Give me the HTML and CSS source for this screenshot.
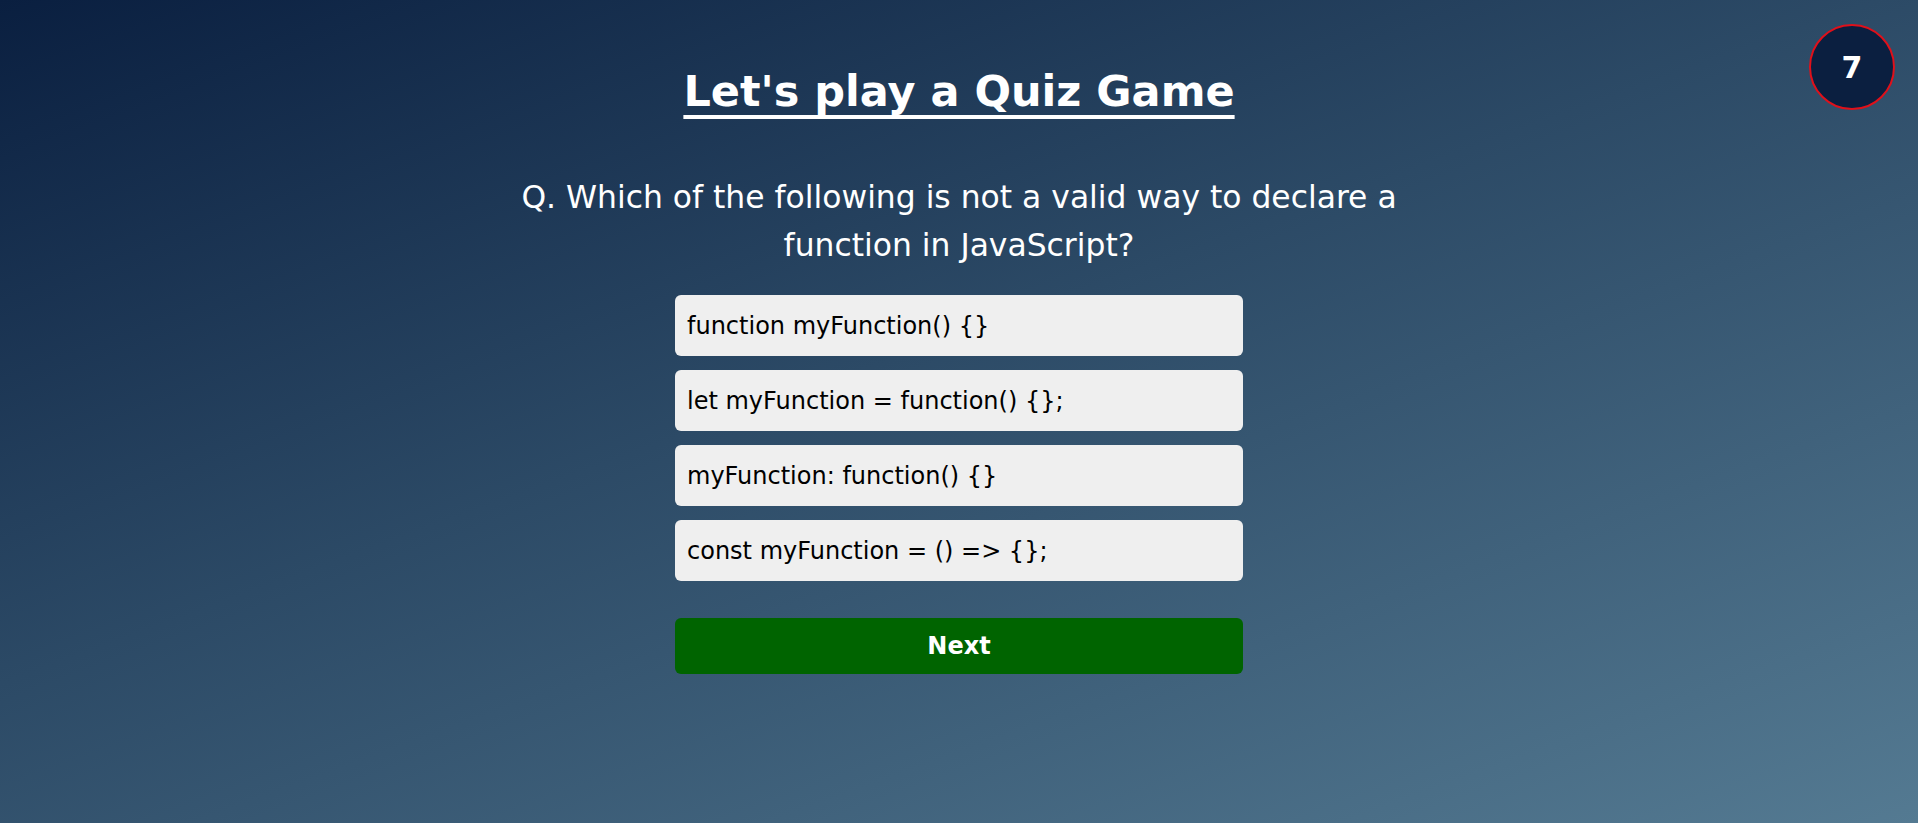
FILE: index.html
```
<!DOCTYPE html>
<html lang="en">
<head>
<meta charset="utf-8">
<title>Quiz Game</title>
<link rel="stylesheet" href="styles.css">
</head>
<body>
<div class="timer">7</div>
<main class="quiz">
  <h1 class="title">Let's play a Quiz Game</h1>
  <p class="question">Q. Which of the following is not a valid way to declare a function in JavaScript?</p>
  <div class="options">
    <button class="option">function myFunction() {}</button>
    <button class="option">let myFunction = function() {};</button>
    <button class="option">myFunction: function() {}</button>
    <button class="option">const myFunction = () =&gt; {};</button>
  </div>
  <button class="next">Next</button>
</main>
</body>
</html>
```
FILE: styles.css
```
* { box-sizing: border-box; }
html, body { margin: 0; height: 100%; }
body {
  font-family: "DejaVu Sans", Verdana, sans-serif;
  background: linear-gradient(160deg, #0a1f40 0%, #2c4a66 45%, #547a92 100%);
  color: #fff;
  overflow: hidden;
}
.timer {
  position: absolute;
  top: 24px;
  right: 23px;
  width: 86px;
  height: 86px;
  border-radius: 50%;
  background: #0b1f40;
  border: 2px solid #e0101a;
  display: flex;
  align-items: center;
  justify-content: center;
  font-weight: bold;
  font-size: 30px;
}
.quiz {
  display: flex;
  flex-direction: column;
  align-items: center;
  padding-top: 66px;
}
.title {
  margin: 0;
  font-size: 43px;
  line-height: 51px;
  font-weight: bold;
  text-decoration: underline;
  text-decoration-thickness: 4px;
  text-underline-offset: 9px;
}
.question {
  width: 900px;
  margin: 56px 0 0;
  text-align: center;
  font-size: 31.4px;
  line-height: 48px;
}
.options {
  width: 568px;
  margin-top: 26px;
  display: flex;
  flex-direction: column;
  gap: 14px;
}
.option {
  height: 61px;
  border: none;
  border-radius: 6px;
  background: #efefef;
  color: #000;
  text-align: left;
  padding: 0 12px;
  font-family: inherit;
  font-size: 24px;
}
.next {
  width: 568px;
  height: 56px;
  margin-top: 37px;
  border: none;
  border-radius: 6px;
  background: #006400;
  color: #fff;
  font-family: inherit;
  font-weight: bold;
  font-size: 24px;
}
```
